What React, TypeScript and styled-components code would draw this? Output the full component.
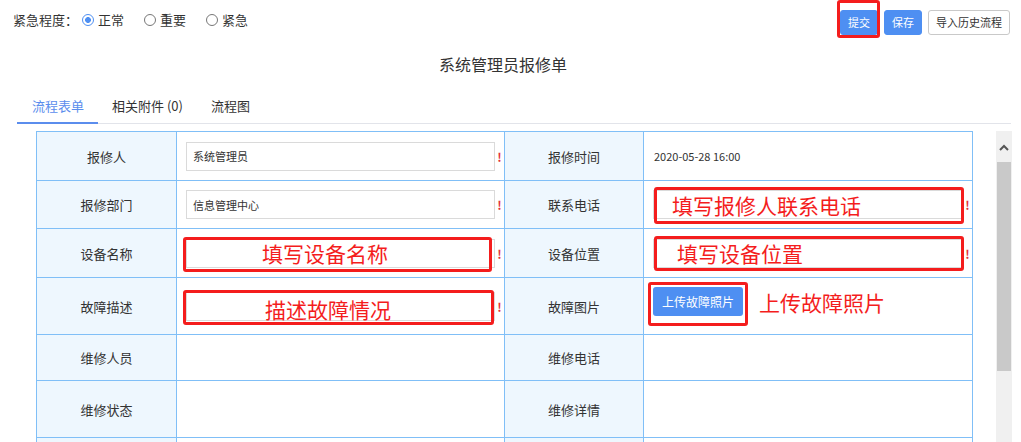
import React from 'react';
import styled, { createGlobalStyle } from 'styled-components';

const BLUE = '#4e8ff2';
const LINE = '#80bff7';
const MARK = '#f41d1d';

const GlobalStyle = createGlobalStyle`
  html, body {
    margin: 0;
    padding: 0;
    background: #fff;
    overflow: hidden;
  }
  body {
    font-family: "Noto Sans CJK SC", "Noto Sans", sans-serif;
    color: #333;
  }
`;

function App() {
  return (
    <Page>
      <GlobalStyle />
      <TopBar>
        <Urgency>
          <span>紧急程度：</span>
          <Radio $checked>正常</Radio>
          <Radio>重要</Radio>
          <Radio>紧急</Radio>
        </Urgency>
        <Actions>
          <Marked $inset="-10px -2px -3px -3px">
            <Button $primary>提交</Button>
          </Marked>
          <Button $primary>保存</Button>
          <Button>导入历史流程</Button>
        </Actions>
      </TopBar>

      <Title>系统管理员报修单</Title>

      <Tabs>
        <Tab $active>流程表单</Tab>
        <Tab>相关附件 (0)</Tab>
        <Tab>流程图</Tab>
      </Tabs>

      <FormArea>
        <Table>
          <Row $h={49}>
            <Label>报修人</Label>
            <Value>
              <Field>系统管理员</Field>
              <Bang>!</Bang>
            </Value>
            <Label>报修时间</Label>
            <Value $pad={10}>
              <Plain>2020-05-28 16:00</Plain>
            </Value>
          </Row>
          <Row $h={48}>
            <Label>报修部门</Label>
            <Value>
              <Field>信息管理中心</Field>
              <Bang>!</Bang>
            </Value>
            <Label>联系电话</Label>
            <Value>
              <Marked $inset="-3px -1px -5px 1px" $grow>
                <Field $note $indent={18}>填写报修人联系电话</Field>
              </Marked>
              <Bang>!</Bang>
            </Value>
          </Row>
          <Row $h={49}>
            <Label>设备名称</Label>
            <Value>
              <Marked $inset="-2px 3px -4px -3px" $grow>
                <Field $note $indent={75}>填写设备名称</Field>
              </Marked>
              <Bang>!</Bang>
            </Value>
            <Label>设备位置</Label>
            <Value>
              <Marked $inset="-3px -1px -3px 1px" $grow>
                <Field $note $indent={23}>填写设备位置</Field>
              </Marked>
              <Bang>!</Bang>
            </Value>
          </Row>
          <Row $h={57}>
            <Label>故障描述</Label>
            <Value>
              <Marked $inset="-2px 1px -4px -3px" $grow>
                <Field $note $indent={78} $drop={5}>描述故障情况</Field>
              </Marked>
              <Bang>!</Bang>
            </Value>
            <Label>故障图片</Label>
            <Value $top={9}>
              <Marked $inset="-5px -5px -10px -5px">
                <Upload>上传故障照片</Upload>
              </Marked>
              <Note>上传故障照片</Note>
            </Value>
          </Row>
          <Row $h={46}>
            <Label>维修人员</Label>
            <Value />
            <Label>维修电话</Label>
            <Value />
          </Row>
          <Row $h={57}>
            <Label>维修状态</Label>
            <Value />
            <Label>维修详情</Label>
            <Value />
          </Row>
          <Row $h={57}>
            <Label />
            <Value />
            <Label />
            <Value />
          </Row>
        </Table>

        <ScrollTrack>
          <ScrollUp>
            <svg width="10" height="7" viewBox="0 0 10 7">
              <path d="M1 6 L5 2 L9 6" fill="none" stroke="#555" strokeWidth="2" />
            </svg>
          </ScrollUp>
          <ScrollThumb />
        </ScrollTrack>
      </FormArea>
    </Page>
  );
}

const Page = styled.div`
  width: 1021px;
  height: 442px;
  overflow: hidden;
`;

const TopBar = styled.div`
  display: flex;
  justify-content: space-between;
  align-items: flex-start;
  padding: 10px 11px 0 13px;
`;

const Urgency = styled.div`
  display: flex;
  align-items: center;
  height: 19px;
  font-size: 13px;
  color: #333;

  > span {
    margin-right: 4px;
  }
`;

const RadioItem = styled.label<{ $checked?: boolean }>`
  display: flex;
  align-items: center;
  gap: 4px;
  margin-right: 20px;

  &::before {
    content: '';
    box-sizing: border-box;
    width: 12px;
    height: 12px;
    border-radius: 50%;
    border: 1px solid ${(p) => (p.$checked ? BLUE : '#777')};
    background: ${(p) =>
      p.$checked
        ? `radial-gradient(circle, ${BLUE} 0 2.6px, #fff 3.2px)`
        : '#fff'};
  }
`;

function Radio({ children, $checked }: { children: React.ReactNode; $checked?: boolean }) {
  return <RadioItem $checked={$checked}>{children}</RadioItem>;
}

const Actions = styled.div`
  display: flex;
  gap: 6px;
`;

const Button = styled.button<{ $primary?: boolean }>`
  height: 25px;
  padding: 0 7px;
  border-radius: 3px;
  font-family: inherit;
  font-size: 11px;
  line-height: 23px;
  cursor: pointer;
  border: 1px solid ${(p) => (p.$primary ? BLUE : '#c9c9c9')};
  background: ${(p) => (p.$primary ? BLUE : '#fff')};
  color: ${(p) => (p.$primary ? '#fff' : '#333')};
`;

const Marked = styled.div<{ $inset: string; $grow?: boolean }>`
  position: relative;
  display: flex;
  flex: ${(p) => (p.$grow ? 1 : 'none')};

  &::after {
    content: '';
    position: absolute;
    inset: ${(p) => p.$inset};
    border: 3px solid ${MARK};
    border-radius: 3px;
    pointer-events: none;
  }
`;

const Title = styled.div`
  margin-top: 18px;
  padding-right: 15px;
  text-align: center;
  font-size: 16px;
  line-height: 22px;
  color: #333;
`;

const Tabs = styled.div`
  display: flex;
  margin: 14px 10px 0 17px;
  border-bottom: 1px solid #e2e4ea;
`;

const Tab = styled.div<{ $active?: boolean }>`
  height: 33px;
  line-height: 34px;
  padding: 0 14px 0 ${(p) => (p.$active ? 15 : 14)}px;
  font-size: 13px;
  color: ${(p) => (p.$active ? '#5b8ded' : '#333')};
  border-bottom: 2px solid ${(p) => (p.$active ? '#5b8ded' : 'transparent')};
  margin-bottom: -1px;
`;

const FormArea = styled.div`
  display: flex;
  align-items: flex-start;
  gap: 23px;
  height: 311px;
  margin-top: 7px;
  padding-left: 36px;
  overflow: hidden;
`;

const Table = styled.div`
  width: 937px;
  flex: none;
  box-sizing: border-box;
  border-top: 1px solid ${LINE};
  border-left: 1px solid ${LINE};
`;

const Row = styled.div<{ $h: number }>`
  display: grid;
  grid-template-columns: 140px 328px 139px 329px;
  height: ${(p) => p.$h}px;

  > div {
    box-sizing: border-box;
    border-right: 1px solid ${LINE};
    border-bottom: 1px solid ${LINE};
  }
`;

const Label = styled.div`
  display: flex;
  align-items: center;
  justify-content: center;
  background: #eef7fe;
  font-size: 13px;
  color: #333;
`;

const Value = styled.div<{ $pad?: number; $top?: number }>`
  display: flex;
  align-items: ${(p) => (p.$top ? 'flex-start' : 'center')};
  padding: ${(p) => p.$top ?? 0}px 0 0 ${(p) => p.$pad ?? 9}px;
  background: #fff;
`;

const Field = styled.div<{ $note?: boolean; $indent?: number; $drop?: number }>`
  flex: 1;
  box-sizing: border-box;
  height: 29px;
  display: flex;
  align-items: center;
  border: 1px solid #dadada;
  background: #fff;
  padding: ${(p) => p.$drop ?? 0}px 0 0 ${(p) => p.$indent ?? 6}px;
  font-size: ${(p) => (p.$note ? 21 : 11)}px;
  color: ${(p) => (p.$note ? MARK : '#333')};
  white-space: nowrap;
  overflow: visible;
`;

const Bang = styled.span`
  width: 9px;
  flex: none;
  text-align: center;
  font-size: 12px;
  font-weight: bold;
  color: #e2333a;
`;

const Plain = styled.span`
  font-size: 11px;
  color: #333;
`;

const Upload = styled.button`
  height: 29px;
  padding: 0 9px;
  border: none;
  border-radius: 3px;
  background: ${BLUE};
  color: #fff;
  font-family: inherit;
  font-size: 12px;
  cursor: pointer;
`;

const Note = styled.span`
  margin: 1px 0 0 16px;
  font-size: 21px;
  line-height: 29px;
  color: ${MARK};
`;

const ScrollTrack = styled.div`
  width: 16px;
  height: 100%;
  flex: none;
  display: flex;
  flex-direction: column;
  align-items: center;
  background: #f0f0f0;
`;

const ScrollUp = styled.div`
  height: 31px;
  display: flex;
  align-items: center;
  justify-content: center;
  padding-top: 2px;
  box-sizing: border-box;
`;

const ScrollThumb = styled.div`
  width: 14px;
  height: 209px;
  background: #c9c9c9;
`;

export default App;
